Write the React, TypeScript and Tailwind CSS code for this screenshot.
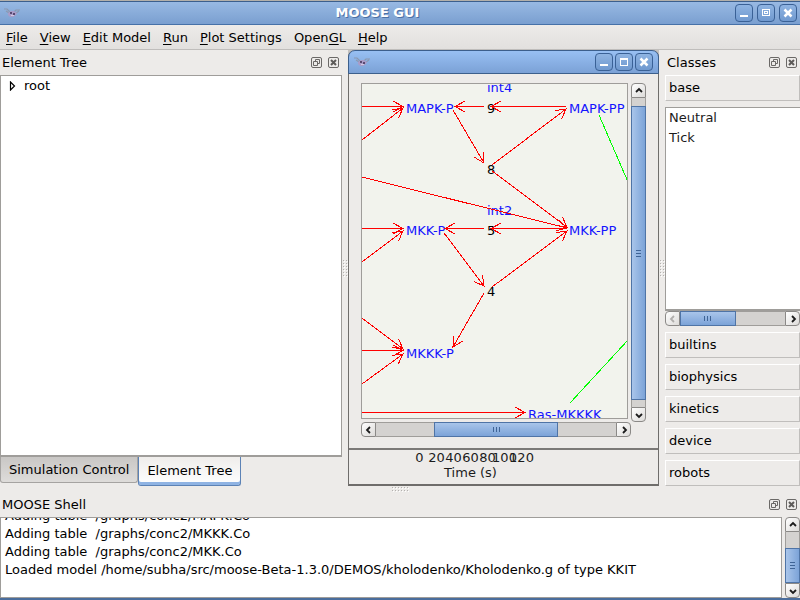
import React from "react";

function MooseIcon() {
  return (
    <svg width="16" height="10" viewBox="0 0 16 10" aria-hidden="true">
      <path d="M0 1h3l3 3M2 3l3 2" stroke="#8b98b0" strokeWidth="1.200" fill="none" />
      <path d="M16 2h-4l-2 2M15 3l-3 2" stroke="#8b98b0" strokeWidth="1.200" fill="none" />
      <path d="M4 5l3-2h3l3 2-1 2-3 2H6L4 7z" fill="#a99cc8" />
      <path d="M6 4h2v2H6zM9 5h2v2H9z" fill="#5a4a72" />
      <path d="M7 7h3v1H7z" fill="#cfc7e2" />
    </svg>
  );
}

type Glyph = "min" | "max" | "restore" | "close";

function WindowButton({ glyph, label }: { glyph: Glyph; label: string }) {
  return (
    <button
      aria-label={label}
      className="flex h-[18px] w-[18px] items-center justify-center rounded-[4px] border border-[#3a6196] bg-linear-to-b from-[#8fb4e2] to-[#7099cf]"
    >
      <svg width="10" height="10" viewBox="0 0 10 10" fill="none" stroke="#fff" shapeRendering="crispEdges">
        {glyph === "min" && <path d="M1 8h8" strokeWidth="2" />}
        {glyph === "max" && <path d="M1 2h8M1.500 2v7M8.500 2v7M1 8.500h8" strokeWidth="1.500" />}
        {glyph === "restore" && <path d="M1.500 1.500h7v6h-7zM3.500 3.500h3v2h-3z" strokeWidth="1" />}
        {glyph === "close" && <path d="M1.500 1.500l7 7M8.500 1.500l-7 7" strokeWidth="2.500" shapeRendering="auto" />}
      </svg>
    </button>
  );
}

function DockTitle({ title }: { title: string }) {
  return (
    <div className="flex h-[25px] shrink-0 items-center justify-between pr-[3px] pl-[2px]">
      <h2>{title}</h2>
      <div className="flex gap-[6px]">
        <button aria-label={`Float ${title}`}>
          <svg width="11" height="11" viewBox="0 0 11 11" fill="none" stroke="#6b6967">
            <rect x="0.500" y="0.500" width="10" height="10" rx="1.500" />
            <path d="M4.500 4.500v-2h4v4h-2M2.500 4.500h4v4h-4z" />
          </svg>
        </button>
        <button aria-label={`Close ${title}`}>
          <svg width="11" height="11" viewBox="0 0 11 11" fill="none" stroke="#6b6967">
            <rect x="0.500" y="0.500" width="10" height="10" rx="1.500" />
            <path d="M3 3l5 5M8 3l-5 5" strokeWidth="2" stroke="#5d5b59" />
          </svg>
        </button>
      </div>
    </div>
  );
}

const chevrons = {
  up: "M2 6l3-3 3 3",
  down: "M2 4l3 3 3-3",
  left: "M6 2l-3 3 3 3",
  right: "M4 2l3 3-3 3",
};

function ArrowButton({ dir, dim }: { dir: keyof typeof chevrons; dim?: boolean }) {
  const shape = {
    up: "rounded-t-[4px] w-full h-[15px]",
    down: "rounded-b-[4px] w-full h-[15px]",
    left: "rounded-l-[4px] h-full w-[15px]",
    right: "rounded-r-[4px] h-full w-[15px]",
  }[dir];
  return (
    <button
      aria-label={`Scroll ${dir}`}
      disabled={dim}
      className={`flex shrink-0 items-center justify-center border border-[#8b8987] bg-linear-to-br from-white to-[#dddbd9] ${shape}`}
    >
      <svg width="10" height="10" viewBox="0 0 10 10" fill="none" stroke={dim ? "#b0aeac" : "#1c1c1c"} strokeWidth="1.800">
        <path d={chevrons[dir]} />
      </svg>
    </button>
  );
}

function VScroll({ before, thumb, after }: { before: number; thumb: number; after: number }) {
  return (
    <div className="flex w-[15px] flex-1 flex-col">
      <ArrowButton dir="up" />
      <div className="flex min-h-0 flex-1 flex-col border-x border-[#9f9d9a] bg-[#d4d2d0]">
        <div className="basis-0" style={{ flexGrow: before }} />
        <div
          className="-mx-px flex basis-0 flex-col items-center justify-center gap-[2px] border border-[#4f74a6] bg-linear-to-r from-[#a9c5ea] to-[#7ca3d8]"
          style={{ flexGrow: thumb }}
        >
          <i className="h-px w-[5px] bg-[#3f6496]" />
          <i className="h-px w-[5px] bg-[#3f6496]" />
          <i className="h-px w-[5px] bg-[#3f6496]" />
        </div>
        <div className="basis-0" style={{ flexGrow: after }} />
      </div>
      <ArrowButton dir="down" />
    </div>
  );
}

function HScroll({ before, thumb, after, atStart }: { before: number; thumb: number; after: number; atStart?: boolean }) {
  return (
    <div className="flex h-[15px] shrink-0">
      <ArrowButton dir="left" dim={atStart} />
      <div className="flex min-w-0 flex-1 border-y border-[#9f9d9a] bg-[#d4d2d0]">
        <div className="basis-0" style={{ flexGrow: before }} />
        <div
          className="-my-px flex basis-0 items-center justify-center gap-[2px] border border-[#4f74a6] bg-linear-to-b from-[#a9c5ea] to-[#7ca3d8]"
          style={{ flexGrow: thumb }}
        >
          <i className="h-[5px] w-px bg-[#3f6496]" />
          <i className="h-[5px] w-px bg-[#3f6496]" />
          <i className="h-[5px] w-px bg-[#3f6496]" />
        </div>
        <div className="basis-0" style={{ flexGrow: after }} />
      </div>
      <ArrowButton dir="right" />
    </div>
  );
}

function Grip({ vertical }: { vertical?: boolean }) {
  return (
    <svg width={vertical ? 5 : 17} height={vertical ? 17 : 5} aria-hidden="true">
      <defs>
        <pattern id="grip-dots" width="3" height="3" patternUnits="userSpaceOnUse">
          <rect width="1" height="1" fill="#b3b1af" />
          <rect x="1" y="1" width="1" height="1" fill="#fff" />
        </pattern>
      </defs>
      <rect width="17" height="17" fill="url(#grip-dots)" />
    </svg>
  );
}

const reactions: [number, number, number, number][] = [
  [362, 106.5, 403, 106.5],
  [362, 140, 403, 108],
  [484, 106.5, 455, 106.5],
  [566, 106.5, 491, 106.5],
  [453, 110, 484, 163],
  [492, 165, 566, 109],
  [492, 171, 567, 227],
  [362, 177, 567, 228],
  [362, 228.5, 403, 228.5],
  [362, 262, 403, 231],
  [484, 228.5, 445, 228.5],
  [566, 228.5, 491, 228.5],
  [444, 233, 484, 286],
  [492, 287, 567, 231],
  [484, 293, 453, 347],
  [362, 318, 403, 349],
  [362, 350.5, 403, 350.5],
  [362, 384, 403, 354],
  [362, 412.5, 525, 412.5],
];

function arrowHead(x1: number, y1: number, x2: number, y2: number) {
  const a = Math.atan2(y2 - y1, x2 - x1);
  const wing = (d: number) => `${x2 - 11 * Math.cos(a + d)} ${y2 - 11 * Math.sin(a + d)}`;
  return `M${wing(0.5)}L${x2} ${y2}L${wing(-0.5)}`;
}

const species: [string, number, number][] = [
  ["int4", 487, 92],
  ["MAPK-P", 406, 113],
  ["MAPK-PP", 569, 113],
  ["int2", 487, 215],
  ["MKK-P", 406, 235],
  ["MKK-PP", 569, 235],
  ["MKKK-P", 406, 358],
  ["Ras-MKKKK", 528, 419],
];

const enzymes: [string, number, number][] = [
  ["9", 487, 113],
  ["8", 487, 174],
  ["5", 487, 235],
  ["4", 487, 296],
];

function Pathway() {
  return (
    <svg className="block h-full w-full" viewBox="362 84 265 334" preserveAspectRatio="xMinYMin slice" fontSize="13">
      <g fill="#000">
        {enzymes.map(([t, x, y]) => (
          <text key={t} x={x} y={y}>{t}</text>
        ))}
      </g>
      <g fill="#1414ff">
        {species.map(([t, x, y]) => (
          <text key={t} x={x} y={y}>{t}</text>
        ))}
      </g>
      <g fill="none" stroke="#f00" shapeRendering="crispEdges">
        {reactions.map((r) => (
          <path key={r.join()} d={`M${r[0]} ${r[1]}L${r[2]} ${r[3]}${arrowHead(...r)}`} />
        ))}
      </g>
      <path d="M599 115L628 182M570 403L628 340" stroke="#0f0" fill="none" shapeRendering="crispEdges" />
    </svg>
  );
}

const menus = [
  ["", "F", "ile"],
  ["", "V", "iew"],
  ["", "E", "dit Model"],
  ["", "R", "un"],
  ["", "P", "lot Settings"],
  ["Open", "G", "L"],
  ["", "H", "elp"],
];

const ticks = ["0", "20", "40", "60", "80", "100", "120"];

function ClassGroup({ name }: { name: string }) {
  return (
    <button className="h-[26px] w-full shrink-0 border border-t-white border-r-[#c0bebc] border-b-[#c0bebc] border-l-white pl-[3px] text-left">
      {name}
    </button>
  );
}

export default function App() {
  return (
    <div className="flex h-screen flex-col overflow-hidden border-t border-[#b3b0aa] bg-[#edebe9] font-['DejaVu_Sans',sans-serif] text-[13px] leading-[18px] text-black">
      <header className="flex h-6 shrink-0 items-center justify-between border-t border-b border-t-[#3c5f8c] border-b-[#4671a8] bg-linear-to-b from-[#98b9e3] to-[#7a9fd0] pr-[3px] pl-1">
        <MooseIcon />
        <h1 className="flex-1 text-center font-bold text-white [text-shadow:1px_1px_0_#4a70a5]">MOOSE GUI</h1>
        <div className="flex gap-1">
          <WindowButton glyph="min" label="Minimize" />
          <WindowButton glyph="restore" label="Restore" />
          <WindowButton glyph="close" label="Close" />
        </div>
      </header>

      <nav className="flex h-[25px] shrink-0 items-center gap-3 border-b border-[#bfbdbb] bg-linear-to-b from-[#edebe9] to-[#e2e0de] pt-[2px] pl-[6px]">
        {menus.map(([a, key, b]) => (
          <button key={key}>
            {a}
            <span className="underline underline-offset-2">{key}</span>
            {b}
          </button>
        ))}
      </nav>

      <main className="flex min-h-0 flex-1">
        <section className="flex w-[342px] shrink-0 flex-col">
          <DockTitle title="Element Tree" />
          <div className="min-h-0 flex-1 border border-b-2 border-[#9f9d9a] bg-white">
            <button className="flex h-5 items-center gap-2 pl-[8px]">
              <svg width="7" height="10" viewBox="0 0 7 10" fill="#fff" stroke="#000" strokeWidth="1.200">
                <path d="M1.500 1v8l4-4z" />
              </svg>
              root
            </button>
          </div>
          <div className="flex h-[29px] shrink-0 items-start">
            <button className="h-[26px] rounded-b-[3px] border border-t-0 border-[#a5a3a1] bg-linear-to-b from-[#c9c7c5] to-[#dedcda] px-2">
              Simulation Control
            </button>
            <button className="h-[29px] rounded-b-[3px] border border-t-0 border-[#5c82b5] bg-linear-to-b from-[#efedeb] to-white px-2 shadow-[inset_0_-3px_0_#8fb3e3]">
              Element Tree
            </button>
          </div>
        </section>

        <div className="flex w-[6px] shrink-0 items-center justify-center">
          <Grip vertical />
        </div>

        <section className="flex min-w-0 flex-1 bg-[#c4c2c0]">
          <div className="flex min-w-0 flex-1 flex-col rounded-t-[7px] border-x border-b-2 border-[#6f6d6b] bg-[#edebe9]">
            <div className="-mx-px flex h-6 shrink-0 items-center justify-between rounded-t-[7px] border border-[#3c5f8c] bg-linear-to-b from-[#98c0f3] to-[#7ba1d6] pr-[5px] pl-[5px]">
              <MooseIcon />
              <div className="flex gap-[2px]">
                <WindowButton glyph="min" label="Minimize pathway" />
                <WindowButton glyph="max" label="Maximize pathway" />
                <WindowButton glyph="close" label="Close pathway" />
              </div>
            </div>
            <div className="flex min-h-0 flex-1 px-3 pt-[9px] pb-[11px]">
              <div className="flex min-w-0 flex-1 flex-col gap-[3px]">
                <div className="mr-[3px] min-h-0 flex-1 overflow-hidden border border-[#9f9d9a] bg-[#f2f3ed]">
                  <Pathway />
                </div>
                <HScroll before={59} thumb={123} after={59} />
              </div>
              <div className="flex shrink-0 pb-[15px]">
                <VScroll before={8} thumb={294} after={7} />
              </div>
            </div>
            <div className="flex h-[36px] shrink-0 flex-col items-center border-t-2 border-[#7b7977] pr-[66px] leading-[15px] text-[#1c1c1c]">
              <div className="flex">
                {ticks.map((t) => (
                  <span key={t} className="flex w-[17px] justify-center">{t}</span>
                ))}
              </div>
              <span>Time (s)</span>
            </div>
          </div>
        </section>

        <div className="flex w-[6px] shrink-0 items-center justify-center">
          <Grip vertical />
        </div>

        <section className="flex w-[135px] shrink-0 flex-col">
          <DockTitle title="Classes" />
          <div className="flex min-h-0 flex-1 flex-col gap-[6px]">
            <ClassGroup name="base" />
            <div className="flex min-h-0 flex-1 flex-col">
              <ul className="min-h-0 flex-1 border border-r-0 border-b-2 border-[#9f9d9a] bg-white pl-[3px] leading-5 text-[#1c1c1c]">
                <li>Neutral</li>
                <li>Tick</li>
              </ul>
              <HScroll before={0} thumb={55} after={50} atStart />
            </div>
            {["builtins", "biophysics", "kinetics", "device", "robots"].map((n) => (
              <ClassGroup key={n} name={n} />
            ))}
          </div>
        </section>
      </main>

      <div className="flex h-[6px] shrink-0 items-center justify-center">
        <Grip />
      </div>

      <section className="flex h-[108px] shrink-0 flex-col border-b-2 border-[#4a6d9c]">
        <DockTitle title="MOOSE Shell" />
        <div className="flex min-h-0 flex-1 gap-[3px]">
          <div className="flex min-w-0 flex-1 flex-col justify-end overflow-hidden border border-[#9f9d9a] bg-white pb-[18px] pl-1 whitespace-pre">
            <p>Adding table  /graphs/conc2/MAPK.Co</p>
            <p>Adding table  /graphs/conc2/MKKK.Co</p>
            <p>Adding table  /graphs/conc2/MKK.Co</p>
            <p>Loaded model /home/subha/src/moose-Beta-1.3.0/DEMOS/kholodenko/Kholodenko.g of type KKIT</p>
          </div>
          <div className="flex shrink-0">
            <VScroll before={17} thumb={34} after={0} />
          </div>
        </div>
      </section>
    </div>
  );
}
